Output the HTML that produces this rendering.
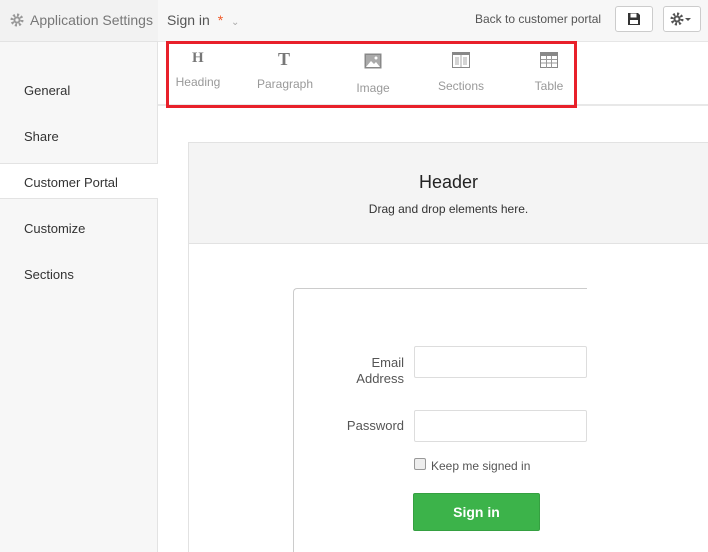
<!DOCTYPE html>
<html><head><style>
*{box-sizing:border-box;margin:0;padding:0}
html,body{width:708px;height:552px;overflow:hidden}
body{font-family:"Liberation Sans",Arial,sans-serif;background:#fff;position:relative}
.abs{position:absolute}
#side{left:0;top:0;width:158px;height:552px;background:#f7f7f7;border-right:1px solid #e3e3e3}
#sidetop{left:0;top:0;width:158px;height:42px;background:#f2f2f2;border-bottom:1px solid #e3e3e3;font-size:14px;color:#777;padding:12px 0 0 10px}
.nav{left:24px;font-size:13px;color:#333}
#cp{left:0;top:163px;width:158px;height:36px;background:#fff;border-top:1px solid #e3e3e3;border-bottom:1px solid #e3e3e3;padding:11px 0 0 24px;font-size:13px;color:#333}
#top{left:158px;top:0;width:550px;height:42px;background:#f7f7f7;border-bottom:1px solid #e6e6e6}
.btn{top:6px;height:26px;border:1px solid #ccc;border-radius:3px;background:#fff}
#tb{left:158px;top:42px;width:550px;height:64px;background:#fff;border-bottom:2px solid #e8e8e8}
#red{left:166px;top:41px;width:411px;height:67px;border:3px solid #e8202a}
.ti{font-size:12px;color:#999;text-align:center;width:80px}
#card{left:188px;top:142px;width:520px;height:410px;border-left:1px solid #e2e2e2;border-top:1px solid #e2e2e2;background:#fff}
#hdr{left:189px;top:143px;width:519px;height:101px;background:#f4f4f4;border-bottom:1px solid #e2e2e2;text-align:center}
#box{left:293px;top:288px;width:294px;height:264px;border-left:1px solid #ccc;border-top:1px solid #ccc;border-radius:4px 0 0 0}
.inp{left:414px;width:173px;height:32px;border:1px solid #ddd;border-radius:2px;background:#fff}
.lbl{font-size:13px;color:#555;text-align:right;width:100px;left:304px}
</style></head><body>
<div class="abs" id="side"></div>
<div class="abs" id="sidetop"><svg width="14" height="14" viewBox="0 0 14 14" style="vertical-align:-2px;margin-right:6px"><circle cx="7" cy="7" r="5" fill="none" stroke="#999" stroke-width="3" stroke-dasharray="2 1.9"/><circle cx="7" cy="7" r="3.5" fill="#999"/><circle cx="7" cy="7" r="1.6" fill="#f2f2f2"/></svg>Application Settings</div>
<div class="abs nav" style="top:83px">General</div>
<div class="abs nav" style="top:129px">Share</div>
<div class="abs" id="cp">Customer Portal</div>
<div class="abs nav" style="top:221px">Customize</div>
<div class="abs nav" style="top:267px">Sections</div>

<div class="abs" id="top"></div>
<div class="abs" style="left:167px;top:12px;font-size:14px;color:#555">Sign in <span style="color:#f05a28;margin-left:4px">*</span> <span style="color:#aaa;font-size:10px;margin-left:4px">&#8964;</span></div>
<div class="abs" style="left:475px;top:12px;font-size:12px;color:#555">Back to customer portal</div>
<div class="abs btn" style="left:615px;width:38px"><svg width="14" height="14" viewBox="0 0 14 14" style="position:absolute;left:11px;top:5px"><path d="M1 1h10l2 2v10H1z" fill="#333"/><rect x="3.5" y="1.5" width="6" height="4" fill="#fff"/><rect x="3" y="8" width="8" height="4" fill="#fff"/></svg></div>
<div class="abs btn" style="left:663px;width:38px"><svg width="24" height="14" viewBox="0 0 24 14" style="position:absolute;left:6px;top:5px"><circle cx="7" cy="7" r="5" fill="none" stroke="#555" stroke-width="3" stroke-dasharray="2 1.9"/><circle cx="7" cy="7" r="3.5" fill="#555"/><circle cx="7" cy="7" r="1.5" fill="#fff"/><path d="M15 6h6l-3 3z" fill="#555"/></svg></div>

<div class="abs" id="tb"></div>
<div class="abs" id="red"></div>
<div class="abs" style="left:192px;top:50px;font:bold 15px 'Liberation Serif',serif;color:#777">H</div>
<div class="abs ti" style="left:158px;top:75px">Heading</div>
<div class="abs" style="left:278px;top:49px;font:bold 18px 'Liberation Serif',serif;color:#777">T</div>
<div class="abs ti" style="left:245px;top:77px">Paragraph</div>
<svg class="abs" style="left:364px;top:53px" width="18" height="16" viewBox="0 0 18 16"><rect x="0.5" y="0.5" width="17" height="15" fill="#888"/><rect x="2" y="2" width="14" height="12" fill="#aaa"/><path d="M2 14l5-6 3 3 2-2 4 5z" fill="#fff"/><circle cx="12" cy="5" r="1.5" fill="#fff"/></svg>
<div class="abs ti" style="left:333px;top:81px">Image</div>
<svg class="abs" style="left:452px;top:52px" width="18" height="16" viewBox="0 0 18 16"><rect x="0.5" y="0.5" width="17" height="15" fill="none" stroke="#888"/><rect x="1" y="1" width="16" height="2" fill="#888"/><path d="M9 3v12M4 5v8M6 5v8M12 5v8M14 5v8" stroke="#aaa"/></svg>
<div class="abs ti" style="left:421px;top:79px">Sections</div>
<svg class="abs" style="left:540px;top:52px" width="18" height="16" viewBox="0 0 18 16"><rect x="0.5" y="0.5" width="17" height="15" fill="none" stroke="#888"/><rect x="1" y="1" width="16" height="3" fill="#888"/><path d="M1 7.5h16M1 11h16M6.5 4v12M11.5 4v12" stroke="#999"/></svg>
<div class="abs ti" style="left:509px;top:79px">Table</div>

<div class="abs" id="card"></div>
<div class="abs" id="hdr"><div style="margin-top:29px;font-size:18px;color:#222">Header</div><div style="margin-top:9px;font-size:12px;color:#333">Drag and drop elements here.</div></div>
<div class="abs" id="box"></div>
<div class="abs lbl" style="top:355px;line-height:16px">Email<br>Address</div>
<div class="abs inp" style="top:346px"></div>
<div class="abs lbl" style="top:418px">Password</div>
<div class="abs inp" style="top:410px"></div>
<div class="abs" style="left:414px;top:458px;width:12px;height:12px;border:1px solid #999;border-radius:2px;background:#eee"></div>
<div class="abs" style="left:431px;top:459px;font-size:12px;color:#555">Keep me signed in</div>
<div class="abs" style="left:413px;top:493px;width:127px;height:38px;background:#3cb34a;border:1px solid #35a041;border-radius:2px;color:#fff;font-weight:bold;font-size:14px;text-align:center;line-height:37px">Sign in</div>
</body></html>
